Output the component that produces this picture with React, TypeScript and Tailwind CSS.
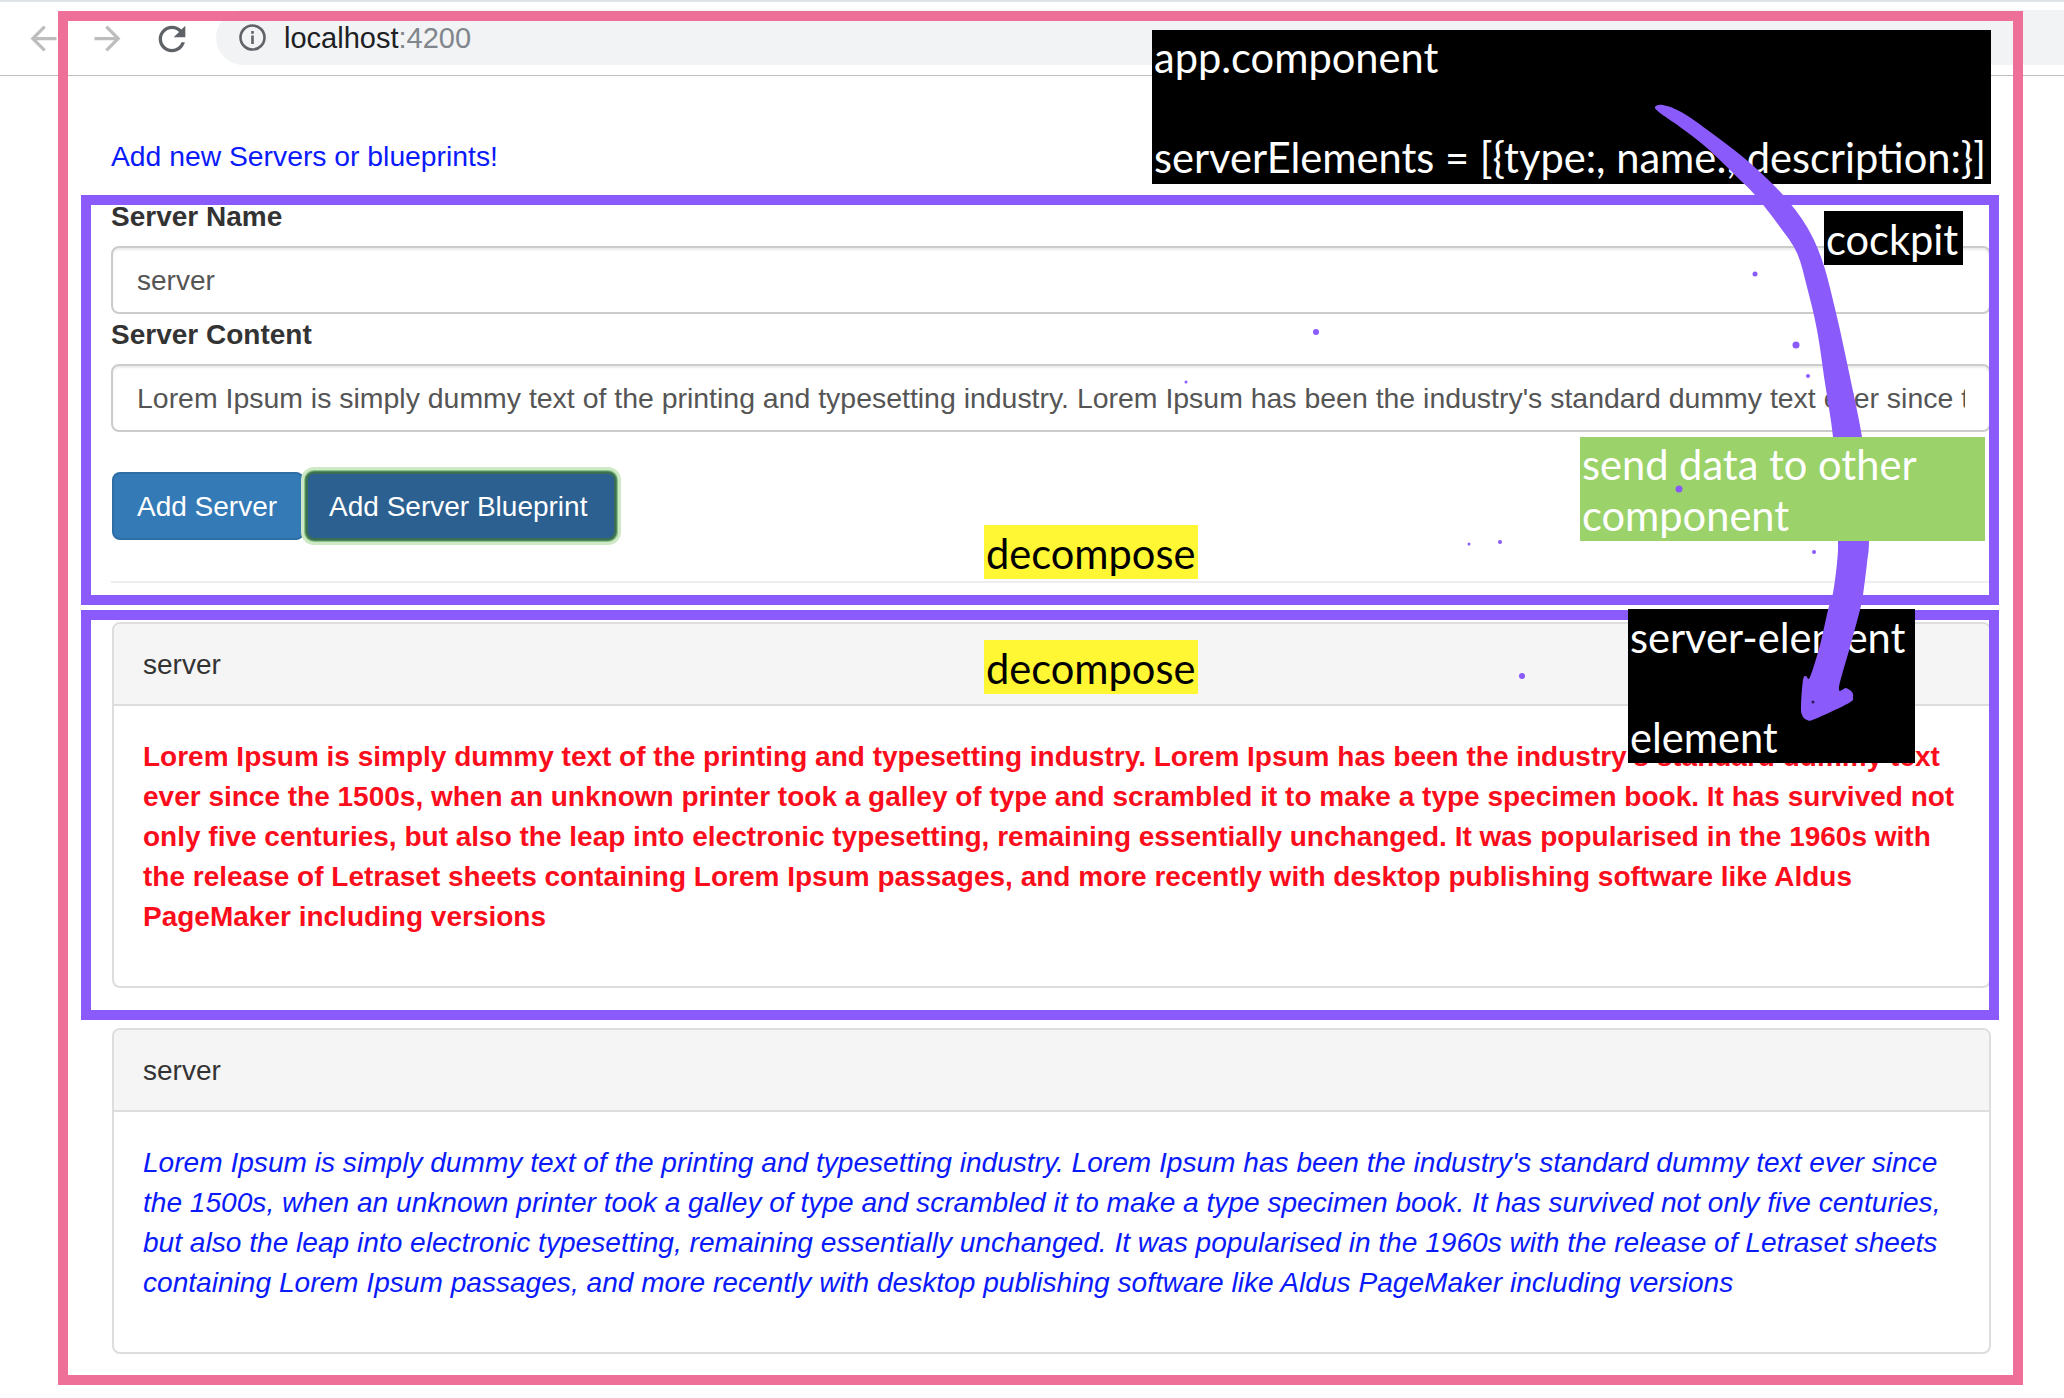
const LOREM =
  "Lorem Ipsum is simply dummy text of the printing and typesetting industry. Lorem Ipsum has been the industry's standard dummy text ever since the 1500s, when an unknown printer took a galley of type and scrambled it to make a type specimen book. It has survived not only five centuries, but also the leap into electronic typesetting, remaining essentially unchanged. It was popularised in the 1960s with the release of Letraset sheets containing Lorem Ipsum passages, and more recently with desktop publishing software like Aldus PageMaker including versions";

const DOTS = [
  [1755, 274, 2.5],
  [1316, 332, 3],
  [1796, 345, 3.5],
  [1186, 382, 1.5],
  [1808, 376, 2],
  [1679, 489, 3.5],
  [1469, 544, 1.5],
  [1500, 542, 2],
  [1814, 552, 2],
  [1522, 676, 3],
];

// outline of the hand drawn arrow, clockwise from its tail
const ARROW_POINTS = [
  [1655, 107], [1663, 105], [1683, 113], [1717, 137], [1750, 163], [1783, 195], [1807, 227],
  [1823, 263], [1837, 317], [1850, 377], [1862, 437], [1868, 490], [1869, 541], [1867, 563],
  [1863, 595], [1860, 610], [1850, 647], [1839, 688], [1846, 688], [1852, 692], [1853, 697],
  [1849, 703], [1815, 719], [1807, 720], [1802, 715], [1801, 705], [1803, 680], [1806, 676],
  [1810, 677], [1820, 645], [1828, 610], [1833, 593], [1837, 563], [1838, 541], [1836, 490],
  [1833, 437], [1825, 383], [1817, 330], [1807, 287], [1797, 253], [1780, 227], [1755, 195],
  [1737, 177], [1707, 148], [1680, 127], [1660, 113],
];

function smoothPath(pts: number[][]) {
  const n = pts.length;
  let d = `M${pts[0][0]} ${pts[0][1]}`;
  for (let i = 0; i < n; i++) {
    const [p0, p1, p2, p3] = [pts[(i - 1 + n) % n], pts[i], pts[(i + 1) % n], pts[(i + 2) % n]];
    const c1 = [p1[0] + (p2[0] - p0[0]) / 6, p1[1] + (p2[1] - p0[1]) / 6];
    const c2 = [p2[0] - (p3[0] - p1[0]) / 6, p2[1] - (p3[1] - p1[1]) / 6];
    d += ` C${c1[0]} ${c1[1]} ${c2[0]} ${c2[1]} ${p2[0]} ${p2[1]}`;
  }
  return d + " Z";
}

function Nav({ d, color, size = 39 }: { d: string; color: string; size?: number }) {
  return (
    <svg width={size} height={size} viewBox="0 0 24 24" fill={color}>
      <path d={d} />
    </svg>
  );
}

function Panel({ tone }: { tone: string }) {
  return (
    <div className="mb-10 ml-px rounded-lg border-2 border-[#ddd] bg-white">
      <div className="rounded-t-md border-b-2 border-[#ddd] bg-[#f5f5f5] pb-[19px] pl-[29px] pr-[30px] pt-[21px] leading-10 text-[#333]">
        server
      </div>
      <div className="pb-[30px] pl-[29px] pr-[30px] pt-[31px]">
        <p className={`mb-[19px] leading-10 ${tone}`}>{LOREM}</p>
      </div>
    </div>
  );
}

function Note({ className, children }: { className: string; children: React.ReactNode }) {
  return <div className={`absolute font-['Lato',sans-serif] text-[41.6px] ${className}`}>{children}</div>;
}

export default function App() {
  return (
    <div className="relative h-[1398px] w-[2064px] overflow-hidden bg-white font-['Liberation_Sans',Arial,sans-serif] text-[28px] text-[#333]">
      {/* browser chrome */}
      <div className="h-[76px] border-b border-[#bdbdbd] [border-top:2px_solid_#dfe3e6]">
        <div className="mt-2 flex h-[55px] items-center">
          <div className="flex w-[216px] items-center gap-[25px] pl-6 pt-[2px]">
            <Nav color="#bdbdbd" d="M20 11H7.83l5.59-5.59L12 4l-8 8 8 8 1.41-1.41L7.83 13H20v-2z" />
            <Nav color="#bdbdbd" d="M12 4l-1.41 1.41L16.17 11H4v2h12.17l-5.58 5.59L12 20l8-8z" />
            <Nav
              color="#5f6368"
              size={40}
              d="M17.65 6.35C16.2 4.9 14.21 4 12 4c-4.42 0-7.99 3.58-7.99 8s3.57 8 7.99 8c3.73 0 6.84-2.55 7.73-6h-2.08c-.82 2.33-3.04 4-5.65 4-3.31 0-6-2.69-6-6s2.69-6 6-6c1.66 0 3.14.69 4.22 1.78L13 11h7V4l-2.35 2.35z"
            />
          </div>
          <div className="flex h-[55px] flex-1 items-center gap-[18px] rounded-l-[28px] bg-[#f1f3f4] pl-[23px]">
            <svg width="27" height="27" viewBox="0 0 27 27" fill="none">
              <circle cx="13.5" cy="13.5" r="12" stroke="#5f6368" strokeWidth="2.6" />
              <rect x="12.2" y="11.5" width="2.6" height="8.5" fill="#5f6368" />
              <rect x="12.2" y="7" width="2.6" height="2.8" fill="#5f6368" />
            </svg>
            <span className="pt-[2px] text-[29px] text-[#202124]">
              localhost<span className="text-[#80868b]">:4200</span>
            </span>
          </div>
        </div>
      </div>

      {/* page content */}
      <main className="pl-[111px] pr-[73px]">
        <p className="mb-[21px] mt-[60px] text-[28.3px] leading-10 text-[#0a1afa]">Add new Servers or blueprints!</p>
        <label className="mb-[9px] block font-bold leading-10">Server Name</label>
        <input
          readOnly
          value="server"
          className="block h-[68px] w-full rounded-lg border-2 border-[#ccc] px-6 pt-[2px] text-[#555] shadow-[inset_0_2px_2px_rgba(0,0,0,0.075)]"
        />
        <label className="mb-[9px] mt-px block font-bold leading-10">Server Content</label>
        <input
          readOnly
          value={LOREM}
          className="block h-[68px] w-full rounded-lg border-2 border-[#ccc] px-6 text-[28.45px] text-[#555] shadow-[inset_0_2px_2px_rgba(0,0,0,0.075)]"
        />
        <div className="mt-10 flex gap-[2px] pl-px">
          <button className="h-[68px] rounded-lg border-2 border-[#2e6da4] bg-[#337ab7] pl-[23px] pr-[25px] pt-px text-white">
            Add Server
          </button>
          <button className="h-[68px] rounded-lg border-2 border-[#3c6f52] bg-[#2c6090] pl-[21px] pr-[27px] pt-px text-white shadow-[0_0_0_1px_#4f8a62,0_0_0_2px_#8cc084,0_0_0_5px_#cfe9c6]">
            Add Server Blueprint
          </button>
        </div>
        <hr className="mb-[39px] mt-[41px] border-t-2 border-[#eee]" />
        <Panel tone="font-bold text-[#fb0d1b]" />
        <Panel tone="text-[28.1px] italic text-[#0a1afa]" />
      </main>

      {/* annotations drawn over the page */}
      <div className="absolute left-[58px] top-[11px] h-[1374px] w-[1965px] border-[10px] border-[#ee7099]" />
      <div className="absolute left-[81px] top-[195px] h-[410px] w-[1918px] border-[10px] border-[#8a5afa]" />
      <div className="absolute left-[81px] top-[610px] h-[410px] w-[1918px] border-[10px] border-[#8a5afa]" />

      <Note className="left-[1152px] top-[30px] h-[154px] w-[839px] bg-black pl-[2px] pt-[2px] leading-[50px] text-white">
        app.component
        <br />
        <br />
        {"serverElements = [{type:, name:, description:}]"}
      </Note>
      <Note className="left-[1824px] top-[211px] h-[54px] w-[139px] bg-black pl-[2px] pt-[3px] leading-[50px] text-white">cockpit</Note>
      <Note className="left-[984px] top-[525px] h-[54px] w-[214px] bg-[#fff733] pl-[2px] pt-[3px] leading-[50px] text-black">decompose</Note>
      <Note className="left-[984px] top-[640px] h-[54px] w-[214px] bg-[#fff733] pl-[2px] pt-[3px] leading-[50px] text-black">decompose</Note>
      <Note className="left-[1628px] top-[609px] h-[154px] w-[287px] bg-black pl-[2px] pt-[3px] leading-[50px] text-white">
        server-element
        <br />
        <br />
        element
      </Note>

      <svg className="absolute left-0 top-0" width="2064" height="1398" viewBox="0 0 2064 1398">
        <path d={smoothPath(ARROW_POINTS)} fill="#8a5afa" />
        <circle cx="1813" cy="702" r="1.5" fill="#2a1a55" />
      </svg>

      <Note className="left-[1580px] top-[437px] h-[104px] w-[405px] bg-[#9bd36a] pl-[2px] pt-[2px] leading-[51px] text-white">
        send data to other
        <br />
        component
      </Note>

      <svg className="absolute left-0 top-0" width="2064" height="1398" viewBox="0 0 2064 1398">
        {DOTS.map(([x, y, r]) => (
          <circle key={`${x}-${y}`} cx={x} cy={y} r={r} fill="#8a5afa" />
        ))}
      </svg>
    </div>
  );
}
